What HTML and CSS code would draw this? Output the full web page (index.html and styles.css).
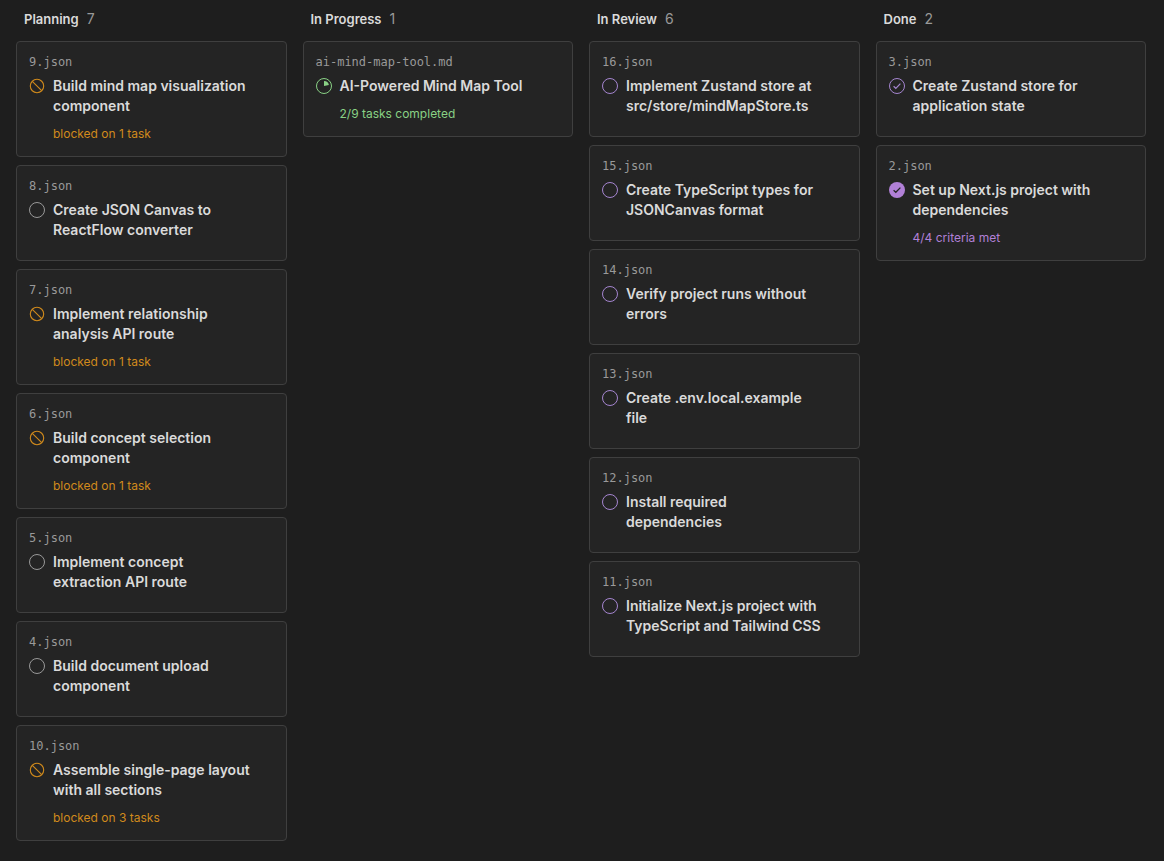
FILE: index.html
```html
<!DOCTYPE html>
<html lang="en">
<head>
    <meta charset="UTF-8">
    <meta name="viewport" content="width=device-width, initial-scale=1.0">
    <title>Task Board</title>
    <link rel="stylesheet" href="styles.css">
</head>
<body>

<!-- Status icons shared by the cards -->
<svg class="sprite" aria-hidden="true">
    <symbol id="icon-open" viewBox="0 0 16 16">
        <circle cx="8" cy="8" r="7.5" fill="none" stroke="currentColor"/>
    </symbol>
    <symbol id="icon-blocked" viewBox="0 0 16 16">
        <circle cx="8" cy="8" r="6.7" fill="none" stroke="currentColor" stroke-width="1.1"/>
        <path d="M3.3 3.3L12.7 12.7" stroke="currentColor" stroke-width="1.1"/>
    </symbol>
    <symbol id="icon-progress" viewBox="0 0 16 16">
        <circle cx="8" cy="8" r="7.5" fill="none" stroke="currentColor"/>
        <path d="M8 8V3A5 5 0 0 1 12.9 7.1Z" fill="currentColor"/>
    </symbol>
    <symbol id="icon-check" viewBox="0 0 16 16">
        <circle cx="8" cy="8" r="7.5" fill="none" stroke="currentColor"/>
        <path d="M4.6 8.3L6.8 10.3L11.4 5.6" fill="none" stroke="currentColor" stroke-width="1.2"/>
    </symbol>
    <symbol id="icon-done" viewBox="0 0 16 16">
        <circle cx="8" cy="8" r="8" fill="currentColor"/>
        <path d="M4.6 8.3L6.8 10.3L11.4 5.6" fill="none" stroke="#242424" stroke-width="1.3"/>
    </symbol>
</svg>

<main class="board">
    <section class="column">
        <h2 class="column-title">Planning <span class="count">7</span></h2>
        <article class="card blocked">
            <div class="file">9.json</div>
            <svg class="icon"><use href="#icon-blocked"/></svg>
            <h3 class="title">Build mind map visualization component</h3>
            <p class="note">blocked on 1 task</p>
        </article>
        <article class="card">
            <div class="file">8.json</div>
            <svg class="icon"><use href="#icon-open"/></svg>
            <h3 class="title">Create JSON Canvas to ReactFlow converter</h3>
        </article>
        <article class="card blocked">
            <div class="file">7.json</div>
            <svg class="icon"><use href="#icon-blocked"/></svg>
            <h3 class="title">Implement relationship analysis API route</h3>
            <p class="note">blocked on 1 task</p>
        </article>
        <article class="card blocked">
            <div class="file">6.json</div>
            <svg class="icon"><use href="#icon-blocked"/></svg>
            <h3 class="title">Build concept selection component</h3>
            <p class="note">blocked on 1 task</p>
        </article>
        <article class="card">
            <div class="file">5.json</div>
            <svg class="icon"><use href="#icon-open"/></svg>
            <h3 class="title">Implement concept extraction API route</h3>
        </article>
        <article class="card">
            <div class="file">4.json</div>
            <svg class="icon"><use href="#icon-open"/></svg>
            <h3 class="title">Build document upload component</h3>
        </article>
        <article class="card blocked">
            <div class="file">10.json</div>
            <svg class="icon"><use href="#icon-blocked"/></svg>
            <h3 class="title">Assemble single-page layout with all sections</h3>
            <p class="note">blocked on 3 tasks</p>
        </article>
    </section>

    <section class="column">
        <h2 class="column-title">In Progress <span class="count">1</span></h2>
        <article class="card progress">
            <div class="file">ai-mind-map-tool.md</div>
            <svg class="icon"><use href="#icon-progress"/></svg>
            <h3 class="title">AI-Powered Mind Map Tool</h3>
            <p class="note">2/9 tasks completed</p>
        </article>
    </section>

    <section class="column">
        <h2 class="column-title">In Review <span class="count">6</span></h2>
        <article class="card review">
            <div class="file">16.json</div>
            <svg class="icon"><use href="#icon-open"/></svg>
            <h3 class="title">Implement Zustand store at src/store/mindMapStore.ts</h3>
        </article>
        <article class="card review">
            <div class="file">15.json</div>
            <svg class="icon"><use href="#icon-open"/></svg>
            <h3 class="title">Create TypeScript types for JSONCanvas format</h3>
        </article>
        <article class="card review">
            <div class="file">14.json</div>
            <svg class="icon"><use href="#icon-open"/></svg>
            <h3 class="title">Verify project runs without errors</h3>
        </article>
        <article class="card review">
            <div class="file">13.json</div>
            <svg class="icon"><use href="#icon-open"/></svg>
            <h3 class="title">Create .env.local.example file</h3>
        </article>
        <article class="card review">
            <div class="file">12.json</div>
            <svg class="icon"><use href="#icon-open"/></svg>
            <h3 class="title">Install required dependencies</h3>
        </article>
        <article class="card review">
            <div class="file">11.json</div>
            <svg class="icon"><use href="#icon-open"/></svg>
            <h3 class="title">Initialize Next.js project with TypeScript and Tailwind CSS</h3>
        </article>
    </section>

    <section class="column">
        <h2 class="column-title">Done <span class="count">2</span></h2>
        <article class="card review">
            <div class="file">3.json</div>
            <svg class="icon"><use href="#icon-check"/></svg>
            <h3 class="title">Create Zustand store for application state</h3>
        </article>
        <article class="card done">
            <div class="file">2.json</div>
            <svg class="icon"><use href="#icon-done"/></svg>
            <h3 class="title">Set up Next.js project with dependencies</h3>
            <p class="note">4/4 criteria met</p>
        </article>
    </section>
</main>

</body>
</html>
```
FILE: styles.css
```css
* {
    box-sizing: border-box;
}
body {
    margin: 0;
    background-color: #1e1e1e;
    color: #dadada;
    font-family: Inter, "Liberation Sans", sans-serif;
}
.sprite {
    display: none;
}
.board {
    display: grid;
    grid-template-columns: repeat(4, minmax(0, 1fr));
    gap: 16px;
    padding: 8px 18px 16px 16px;
}
.column {
    display: flex;
    flex-direction: column;
    gap: 8px;
}
.column-title {
    display: flex;
    align-items: center;
    gap: 8px;
    margin: 0;
    padding: 0 8px 3px;
    font-size: 13px;
    font-weight: 600;
    line-height: 22px;
}
.count {
    color: #999;
    font-size: 14px;
    font-weight: 400;
}
.card {
    display: grid;
    grid-template-columns: 16px 1fr;
    column-gap: 8px;
    padding: 12px;
    background-color: #242424;
    border: 1px solid #3f3f3f;
    border-radius: 4px;
    color: #999;
}
.file {
    grid-column: 1 / -1;
    margin-bottom: 6px;
    font-family: "DejaVu Sans Mono", monospace;
    font-size: 12px;
    line-height: 16px;
}
.icon {
    width: 16px;
    height: 16px;
    margin-top: 2px;
}
.title {
    margin: 0 22px 8px 0;
    color: #dadada;
    font-size: 14px;
    font-weight: 600;
    line-height: 20px;
}
.note {
    grid-column: 2;
    margin: 0;
    font-size: 12px;
    line-height: 20px;
}
.blocked {
    color: #d08a1c;
}
.progress {
    color: #89d185;
}
.review {
    color: #a585d0;
}
.done {
    color: #b180d7;
}
.card .file {
    color: #999;
}
```
